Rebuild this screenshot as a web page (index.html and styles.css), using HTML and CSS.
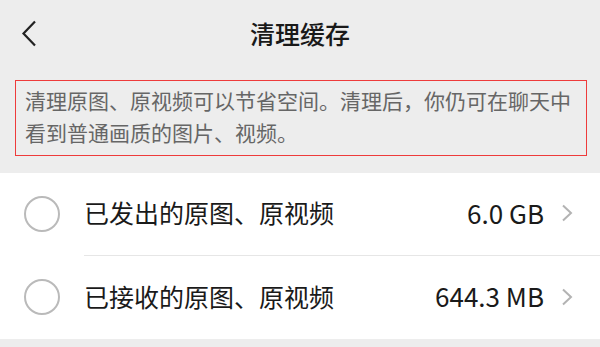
FILE: index.html
```html
<!DOCTYPE html>
<html lang="zh-CN">

<head>
    <meta charset="UTF-8">
    <meta name="viewport" content="width=device-width, initial-scale=1.0">
    <title>清理缓存</title>
    <link rel="stylesheet" href="styles.css">
</head>

<body>

    <!-- Top bar -->
    <div class="top-bar">
        <div class="back">
            <svg width="16" height="27" viewBox="0 0 16 27">
                <polyline points="14,1.5 2.5,13.5 14,25.5" fill="none" stroke="#222" stroke-width="2.2" />
            </svg>
        </div>
        <div class="title">清理缓存</div>
        <div class="spacer"></div>
    </div>

    <!-- Notice -->
    <div class="notice">清理原图、原视频可以节省空间。清理后，你仍可在聊天中看到普通画质的图片、视频。</div>

    <!-- Items -->
    <div class="list">
        <div class="item">
            <span class="check"></span>
            <div class="item-body">
                <span class="item-name">已发出的原图、原视频</span>
                <span class="item-size">6.0 GB</span>
                <svg class="arrow" width="12" height="18" viewBox="0 0 12 18">
                    <polyline points="2,1.5 10,9 2,16.5" fill="none" stroke="#b3b3b3" stroke-width="2" />
                </svg>
            </div>
        </div>
        <div class="item">
            <span class="check"></span>
            <div class="item-body">
                <span class="item-name">已接收的原图、原视频</span>
                <span class="item-size">644.3 MB</span>
                <svg class="arrow" width="12" height="18" viewBox="0 0 12 18">
                    <polyline points="2,1.5 10,9 2,16.5" fill="none" stroke="#b3b3b3" stroke-width="2" />
                </svg>
            </div>
        </div>
    </div>

</body>

</html>
```

FILE: styles.css
```css
body {
    margin: 0;
    width: 600px;
    height: 347px;
    overflow: hidden;
    background-color: #ededed;
    font-family: "Noto Sans CJK SC", "Noto Sans", sans-serif;
}

/* Top bar */
.top-bar {
    height: 70px;
    display: grid;
    grid-template-columns: 60px 1fr 60px;
    align-items: center;
}

.back {
    padding-left: 21px;
    height: 27px;
    margin-top: -3px;
}

.back svg {
    display: block;
}

.title {
    text-align: center;
    font-size: 25px;
    font-weight: 500;
    color: #191919;
    margin-top: -4px;
}

/* Notice box */
.notice {
    margin: 10px 13px 0 15px;
    padding: 3px 8px 7px 9px;
    border: 1.5px solid #ee3b3b;
    font-size: 21px;
    line-height: 32px;
    color: #666;
}

/* Item list */
.list {
    margin-top: 17px;
    background-color: #fff;
}

.item {
    display: flex;
    align-items: stretch;
    height: 82px;
}

.item + .item {
    height: 84px;
}

.check {
    flex: none;
    width: 32px;
    height: 32px;
    border: 2px solid #bababa;
    border-radius: 50%;
    margin: 0 24px 0 24px;
    align-self: center;
}

.item-body {
    flex: 1;
    display: flex;
    align-items: center;
    padding-right: 27px;
    padding-bottom: 4px;
}

.item + .item .item-body {
    border-top: 1px solid #e6e6e6;
}

.item-name {
    flex: 1;
    font-size: 25px;
    color: #1a1a1a;
}

.item-size {
    font-size: 26px;
    color: #1a1a1a;
    margin-right: 17px;
}

.arrow {
    display: block;
    margin-top: 2px;
}
```
